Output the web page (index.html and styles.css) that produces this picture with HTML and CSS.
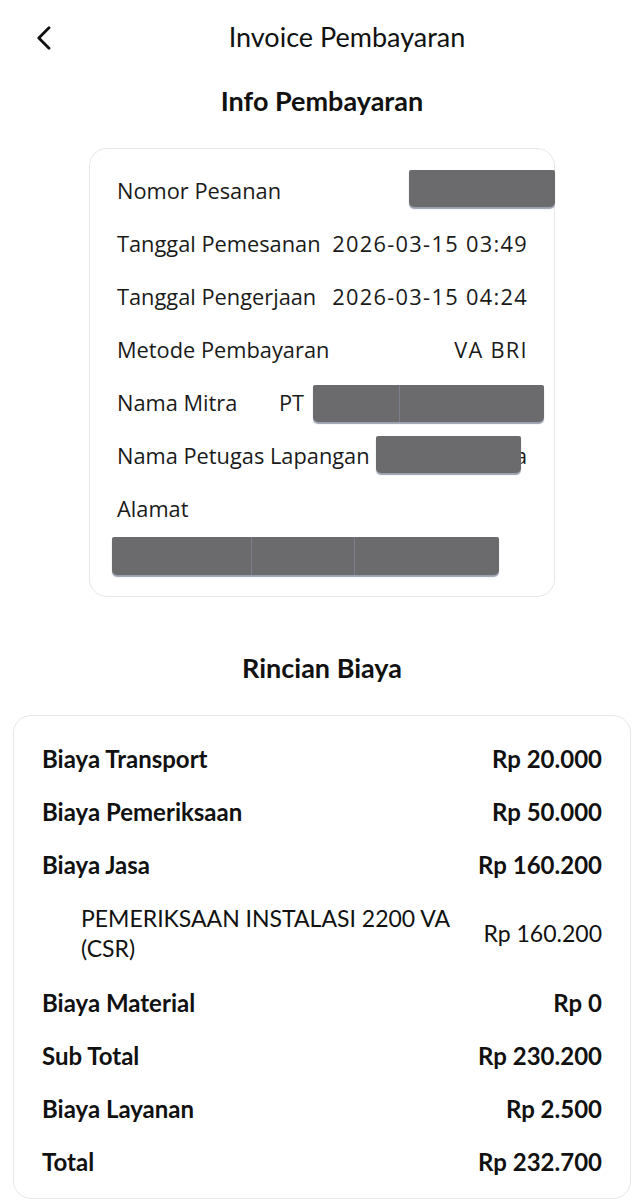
FILE: index.html
```html
<!DOCTYPE html>
<html lang="id">
  <head>
    <meta charset="UTF-8" />
    <meta name="viewport" content="width=device-width, initial-scale=1.0" />
    <title>Invoice Pembayaran</title>
    <link rel="stylesheet" href="styles.css">
  </head>
  <body>
    <div class="topbar">
      <button class="back">
        <svg width="16" height="24" viewBox="0 0 16 24">
          <path d="M13 1.8 L2.8 12 L13 22.2" fill="none" stroke="#111" stroke-width="2.8" stroke-linecap="round" stroke-linejoin="round" />
        </svg>
      </button>
      <div class="title">Invoice Pembayaran</div>
    </div>

    <h2 class="section-title">Info Pembayaran</h2>

    <div class="info">
      <div class="row">
        <span>Nomor Pesanan</span>
        <span class="hidden hide-order"><i></i></span>
      </div>
      <div class="row">
        <span>Tanggal Pemesanan</span>
        <span class="value">2026-03-15 03:49</span>
      </div>
      <div class="row">
        <span>Tanggal Pengerjaan</span>
        <span class="value">2026-03-15 04:24</span>
      </div>
      <div class="row">
        <span>Metode Pembayaran</span>
        <span class="value">VA BRI</span>
      </div>
      <div class="row start">
        <span class="mitra">Nama Mitra</span>
        <span>PT</span>
        <span class="hidden hide-mitra"><i class="w86"></i><i></i></span>
      </div>
      <div class="row">
        <span>Nama Petugas Lapangan</span>
        <span>a</span>
        <span class="hidden hide-petugas"><i></i></span>
      </div>
      <div class="row">
        <span>Alamat</span>
      </div>
      <div class="address">
        <span class="hidden hide-address"><i class="w139"></i><i class="w102"></i><i></i></span>
      </div>
    </div>

    <h2 class="section-title cost-title">Rincian Biaya</h2>

    <div class="cost">
      <div class="cost-row"><span>Biaya Transport</span><span>Rp 20.000</span></div>
      <div class="cost-row"><span>Biaya Pemeriksaan</span><span>Rp 50.000</span></div>
      <div class="cost-row"><span>Biaya Jasa</span><span>Rp 160.200</span></div>
      <div class="cost-row sub">
        <span class="sub-name">PEMERIKSAAN INSTALASI 2200 VA (CSR)</span>
        <span>Rp 160.200</span>
      </div>
      <div class="cost-row"><span>Biaya Material</span><span>Rp 0</span></div>
      <div class="cost-row"><span>Sub Total</span><span>Rp 230.200</span></div>
      <div class="cost-row"><span>Biaya Layanan</span><span>Rp 2.500</span></div>
      <div class="cost-row"><span>Total</span><span>Rp 232.700</span></div>
    </div>
  </body>
</html>
```

FILE: styles.css
```css
body {
  margin: 0;
  background: #fff;
  color: #111;
  font-family: Lato, "Open Sans", sans-serif;
}

.topbar {
  display: flex;
  align-items: center;
  height: 76px;
}

.back {
  width: 56px;
  height: 76px;
  padding: 0 0 1px 36px;
  border: none;
  background: none;
  display: flex;
  align-items: center;
}

.title {
  flex: 1;
  text-align: center;
  font-size: 27px;
  padding: 0 6px 4px 0;
}

.section-title {
  margin: 0;
  text-align: center;
  font-size: 27px;
  font-weight: 700;
  line-height: 50px;
}

.info {
  width: 466px;
  box-sizing: border-box;
  margin: 22px auto 0;
  padding: 15px 27px 17px;
  border: 1px solid #e6e6e6;
  border-radius: 18px;
  font-family: "Open Sans", sans-serif;
  font-size: 21.8px;
  color: #1a1a1a;
}

.row {
  position: relative;
  display: flex;
  justify-content: space-between;
  align-items: center;
  height: 53px;
}

.row.start {
  justify-content: flex-start;
}

.value {
  letter-spacing: 1.3px;
  margin-right: -1px;
}

.mitra {
  width: 162px;
}

.address {
  position: relative;
  height: 44px;
}

.hidden {
  position: absolute;
  display: flex;
  background: #6b6b6d;
  border-radius: 2px 2px 5px 5px;
  box-shadow: 0 2px 1px #9aa0b0;
}

.hidden i {
  flex: 1;
  border-left: 1px solid #7b7f8c;
}

.hidden i:first-child {
  border-left: none;
}

.hidden .w86 {
  flex: 0 0 86px;
}

.hidden .w139 {
  flex: 0 0 139px;
}

.hidden .w102 {
  flex: 0 0 102px;
}

.hide-order {
  left: 292px;
  right: -28px;
  top: 6px;
  height: 37px;
}

.hide-mitra {
  left: 196px;
  right: -17px;
  top: 9px;
  height: 37px;
}

.hide-petugas {
  left: 259px;
  right: 6px;
  top: 7px;
  height: 37px;
}

.hide-address {
  left: -5px;
  right: 28px;
  top: 2px;
  height: 38px;
}

.cost-title {
  margin-top: 46px;
}

.cost {
  margin: 22px 13px 0;
  padding: 16px 28px 10px;
  border: 1px solid #e6e6e6;
  border-radius: 18px;
  font-size: 24px;
  font-weight: 700;
}

.cost-row {
  display: flex;
  justify-content: space-between;
  align-items: center;
  min-height: 53px;
}

.cost-row.sub {
  font-weight: 400;
  font-size: 23px;
  padding: 12px 0 13px 39px;
  line-height: 30px;
}

.sub-name {
  width: 390px;
}
```
